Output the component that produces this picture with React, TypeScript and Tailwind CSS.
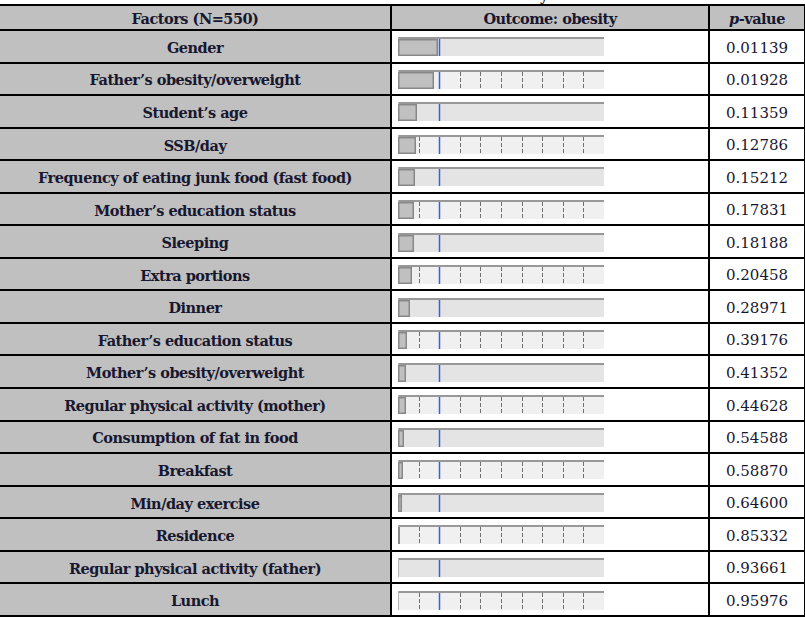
import React from "react";

type Row = [string, string, number];

const rows: Row[] = [
  ["Gender", "0.01139", 40],
  ["Father’s obesity/overweight", "0.01928", 36],
  ["Student’s age", "0.11359", 19],
  ["SSB/day", "0.12786", 18],
  ["Frequency of eating junk food (fast food)", "0.15212", 17],
  ["Mother’s education status", "0.17831", 16],
  ["Sleeping", "0.18188", 16],
  ["Extra portions", "0.20458", 14],
  ["Dinner", "0.28971", 12],
  ["Father’s education status", "0.39176", 9],
  ["Mother’s obesity/overweight", "0.41352", 8],
  ["Regular physical activity (mother)", "0.44628", 8],
  ["Consumption of fat in food", "0.54588", 6],
  ["Breakfast", "0.58870", 5],
  ["Min/day exercise", "0.64600", 4],
  ["Residence", "0.85332", 2],
  ["Regular physical activity (father)", "0.93661", 0],
  ["Lunch", "0.95976", 0],
];

function Strip({ grid, w }: { grid: boolean; w: number }) {
  const ticks = [1, 3, 4, 5, 6, 7, 8, 9];
  return (
    <svg width={206} height={19} viewBox="0 0 206 19" className="block">
      <rect x={0} y={0} width={206} height={19} fill={grid ? "#f0f0f0" : "#e4e4e4"} />
      <rect x={0} y={0} width={206} height={2} fill="#989898" />
      <rect x={0} y={0} width={1} height={19} fill="#b4b4b4" />
      {grid &&
        ticks.map((k) => {
          const x = Math.round(20.6 * k) + 0.5;
          return (
            <line key={k} x1={x} x2={x} y1={2} y2={19} stroke="#707070" strokeWidth={1} strokeDasharray="4 2" />
          );
        })}
      <line x1={41.5} x2={41.5} y1={2} y2={19} stroke="#2f62e4" strokeWidth={1.5} />
      {w > 0 && (
        <rect
          x={0.75}
          y={2.75}
          width={Math.max(w - 1.5, 0.5)}
          height={15.5}
          fill="#c0c0c0"
          stroke="#888888"
          strokeWidth={1.5}
        />
      )}
    </svg>
  );
}

export default function App() {
  return (
    <div className="w-[805px] h-[617px] overflow-hidden bg-white font-['DejaVu_Serif',serif] text-[#17172f]">
      <div className="h-[4px] overflow-hidden">
        <div className="pl-[540px] text-[15px] leading-[15px] -mt-[11px]">y</div>
      </div>
      <div className="w-[806px] border-t-2 border-black">
        <div className="grid grid-cols-[390px_318px_98px] h-[25px] border-b-2 border-black bg-[#c0c0c0] text-[14.5px] tracking-[-0.5px] font-bold">
          <div className="flex items-center justify-center pt-[2px]">Factors (N=550)</div>
          <div className="flex items-center justify-center pt-[2px] border-l-2 border-black">Outcome: obesity</div>
          <div className="flex items-center justify-center pt-[2px] border-l-2 border-r-2 border-black">
            <span className="italic">p</span>-value
          </div>
        </div>
        {rows.map(([label, p, w], i) => (
          <div
            key={label}
            className="grid grid-cols-[390px_318px_98px] h-[32.55px] border-b-2 border-black"
          >
            <div className="flex items-center justify-center pt-[3px] bg-[#c0c0c0] text-[14.5px] tracking-[-0.5px] font-bold">
              {label}
            </div>
            <div className="flex items-center pl-[6px] pt-[1px] border-l-2 border-black bg-white">
              <Strip grid={i % 2 === 1} w={w} />
            </div>
            <div className="flex items-center justify-center pt-[3px] border-l-2 border-r-2 border-black bg-white text-[15px]">
              {p}
            </div>
          </div>
        ))}
      </div>
    </div>
  );
}
